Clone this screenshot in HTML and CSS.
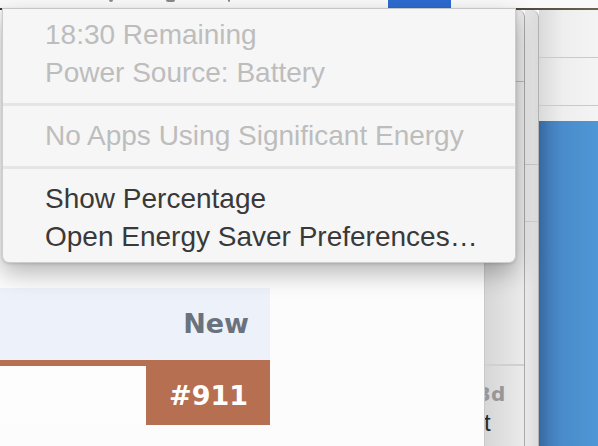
FILE: index.html
```html
<!DOCTYPE html>
<html lang="en">
<head>
    <meta charset="UTF-8">
    <meta name="viewport" content="width=device-width, initial-scale=1.0">
    <title>Battery Menu</title>
    <link rel="stylesheet" href="styles.css">
</head>
<body>
    <div class="desk">
        <div class="menubar">
            <span class="bar-glyph g1"></span>
            <span class="bar-glyph g2"></span>
            <span class="bar-glyph g3"></span>
            <span class="bar-active"></span>
        </div>

        <div class="workspace">
            <div class="page">
                <div class="issue">
                    <div class="issue-head">New</div>
                    <div class="issue-bar"></div>
                    <div class="issue-row">
                        <div class="issue-blank"></div>
                        <div class="issue-num">#911</div>
                    </div>
                </div>
            </div>
            <div class="sidebar">
                <div class="sidebar-top"></div>
                <div class="sidebar-mid"></div>
                <div class="sidebar-low">
                    <span class="side-label">3d</span>
                    <span class="side-text">t</span>
                </div>
            </div>
            <div class="edge">
                <div class="edge-top"></div>
                <div class="edge-mid"></div>
                <div class="edge-rest"></div>
            </div>
            <div class="window">
                <div class="window-head">
                    <div class="head-row"></div>
                    <div class="head-row"></div>
                    <div class="head-row last"></div>
                </div>
                <div class="window-body"></div>
            </div>
        </div>

        <div class="menu">
            <div class="item disabled">18:30 Remaining</div>
            <div class="item disabled">Power Source: Battery</div>
            <div class="separator"></div>
            <div class="item disabled">No Apps Using Significant Energy</div>
            <div class="separator"></div>
            <div class="item">Show Percentage</div>
            <div class="item">Open Energy Saver Preferences…</div>
        </div>
    </div>
</body>
</html>
```

FILE: styles.css
```css
html, body {
    margin: 0;
    height: 100%;
    overflow: hidden;
}
body {
    font-family: "Liberation Sans", Arial, sans-serif;
    background: #fcfcfc;
}
.desk {
    position: relative;
    width: 598px;
    height: 446px;
    display: flex;
    flex-direction: column;
}

/* top strip of the menu bar */
.menubar {
    height: 8px;
    background: #f9f9f9;
    display: flex;
    position: relative;
}
.bar-glyph {
    position: absolute;
    top: 0;
    height: 2px;
    background: #8a8a8a;
    border-radius: 0 0 2px 2px;
}
.g1 { left: 109px; width: 4px; }
.g2 { left: 166px; width: 9px; }
.g3 { left: 228px; width: 2px; }
.bar-active {
    margin-left: 388px;
    width: 63px;
    background: #2e6bd0;
}

.workspace {
    flex: 1;
    display: flex;
    border-top: 2px solid #3b3b3b;
    border-image: linear-gradient(90deg, #3a3a3a, #3d3a36 80%, #6e6450) 1;
}

/* page under the menu */
.page {
    width: 484px;
    background: #fcfcfc;
}
.issue {
    width: 270px;
    margin-top: 278px;
    font-family: "DejaVu Sans", Verdana, sans-serif;
    font-weight: bold;
    font-size: 27px;
}
.issue-head {
    height: 72px;
    line-height: 72px;
    background: #edf2fa;
    color: #6a737d;
    text-align: right;
    padding-right: 21px;
}
.issue-bar {
    height: 6px;
    background: #b76f51;
}
.issue-row {
    display: flex;
    height: 59px;
}
.issue-blank {
    width: 146px;
    background: #fdfdfd;
}
.issue-num {
    flex: 1;
    background: #b76f51;
    color: #fff;
    text-align: right;
    padding-right: 22px;
    line-height: 59px;
}

/* stacked window edges on the right */
.sidebar {
    width: 39px;
    display: flex;
    flex-direction: column;
    border-left: 1px solid #c9c9c9;
    border-right: 1px solid #a9a9a9;
    border-top-right-radius: 7px;
    background: linear-gradient(90deg, #d6d6d6, #ebebeb);
    overflow: hidden;
}
.sidebar-top {
    height: 71px;
    border-bottom: 1px solid #b9b9b9;
}
.sidebar-mid {
    height: 282px;
    border-bottom: 2px solid #d0d0d0;
}
.sidebar-low {
    flex: 1;
    padding-top: 16px;
    display: flex;
    flex-direction: column;
}
.side-label {
    margin-left: -8px;
    font-family: "DejaVu Sans", Verdana, sans-serif;
    font-weight: bold;
    font-size: 20px;
    line-height: 24px;
    color: #979797;
}
.side-text {
    margin-left: -1px;
    margin-top: 4px;
    font-size: 24px;
    line-height: 26px;
    color: #2a2a2a;
}

.edge {
    width: 13px;
    display: flex;
    flex-direction: column;
    border-right: 1px solid #b3b3b3;
    border-top-right-radius: 7px;
    background: linear-gradient(90deg, #e9e9e9, #dcdcdc);
}
.edge-top {
    height: 154px;
    border-bottom: 1px solid #c6c6c6;
}
.edge-mid {
    height: 56px;
    border-bottom: 1px solid #cfcfcf;
}
.edge-rest {
    flex: 1;
}

.window {
    flex: 1;
    display: flex;
    flex-direction: column;
}
.window-head {
    height: 111px;
    background: linear-gradient(90deg, #dadada, #eeeeee 40%, #f4f4f4);
}
.head-row {
    height: 47px;
    border-bottom: 1px solid #c9c9c9;
}
.head-row.last {
    height: 14px;
    border-bottom: none;
}
.window-body {
    flex: 1;
    background: linear-gradient(90deg, #36699f, #447fbd 12px, #4a8ccb 40%, #4f96d6);
}

/* the battery menu, lying over everything */
.menu {
    position: absolute;
    top: 8px;
    left: 2px;
    width: 512px;
    padding: 7px 0 6px;
    background: #f6f6f6;
    border: 1px solid #cdcdcd;
    border-top-color: #c6c6c6;
    border-radius: 0 0 7px 7px;
    box-shadow: 0 10px 24px rgba(0, 0, 0, 0.28), 0 1px 3px rgba(0, 0, 0, 0.15);
}
.item {
    padding-left: 42px;
    height: 38px;
    line-height: 38px;
    font-size: 28px;
    color: #393939;
    white-space: nowrap;
}
.item.disabled {
    color: #bdbdbd;
}
.separator {
    height: 3px;
    margin: 11px 0;
    background: #e5e5e5;
}
```
